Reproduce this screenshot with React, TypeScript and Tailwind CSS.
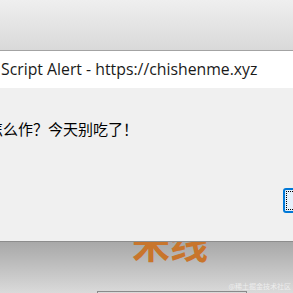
export default function App() {
  return (
    <div className="relative w-[293px] h-[293px] overflow-hidden font-['Open_Sans','Noto_Sans',sans-serif]">
      {/* Page behind the alert */}
      <div className="h-[51px] bg-gradient-to-b from-[#efefef] to-[#d9d9d9] border-b border-[#a3a3a3]" />
      <main className="h-[242px] bg-[linear-gradient(to_bottom,#9a9a9a_0%,#a8a8a8_79%,#dadada_100%)] flex flex-col">
        <h1 className="mt-[172px] ml-[132px] text-[38px] leading-none font-bold text-[#c8752c] font-['Noto_Sans_CJK_SC',sans-serif]">
          米线
        </h1>
        <div className="mt-[30px] ml-[97px] w-[150px] h-[20px] shrink-0 border border-[#8a8a8a]" />
      </main>
      <span className="absolute right-[2px] bottom-[3px] text-[7px] leading-none text-white/60 font-['Noto_Sans_CJK_SC',sans-serif]">
        @稀土掘金技术社区
      </span>

      {/* Alert dialog */}
      <div className="absolute left-0 right-0 top-[51px] h-[191px] flex flex-col border-b border-[#8c8c8c] overflow-hidden">
        <div className="h-[37px] bg-white flex items-center pl-[1px] text-[15.8px] text-[#1a1a1a] whitespace-nowrap">
          Script Alert - https://chishenme.xyz
        </div>
        <div className="flex-1 bg-[#f0f0f0] flex flex-col">
          <p className="mt-[33px] ml-[-12px] text-[15px] leading-none text-black whitespace-nowrap font-['Noto_Sans_CJK_SC',sans-serif]">
            怎么作？今天别吃了！
          </p>
          <div className="mt-[52px] flex justify-end mr-[-65px]">
            <button className="w-[75px] h-[25px] rounded-[3px] border-2 border-[#0078d7] bg-[#e5f1fb] p-[1px]">
              <div className="w-full h-full border border-dotted border-black" />
            </button>
          </div>
        </div>
      </div>
    </div>
  );
}
